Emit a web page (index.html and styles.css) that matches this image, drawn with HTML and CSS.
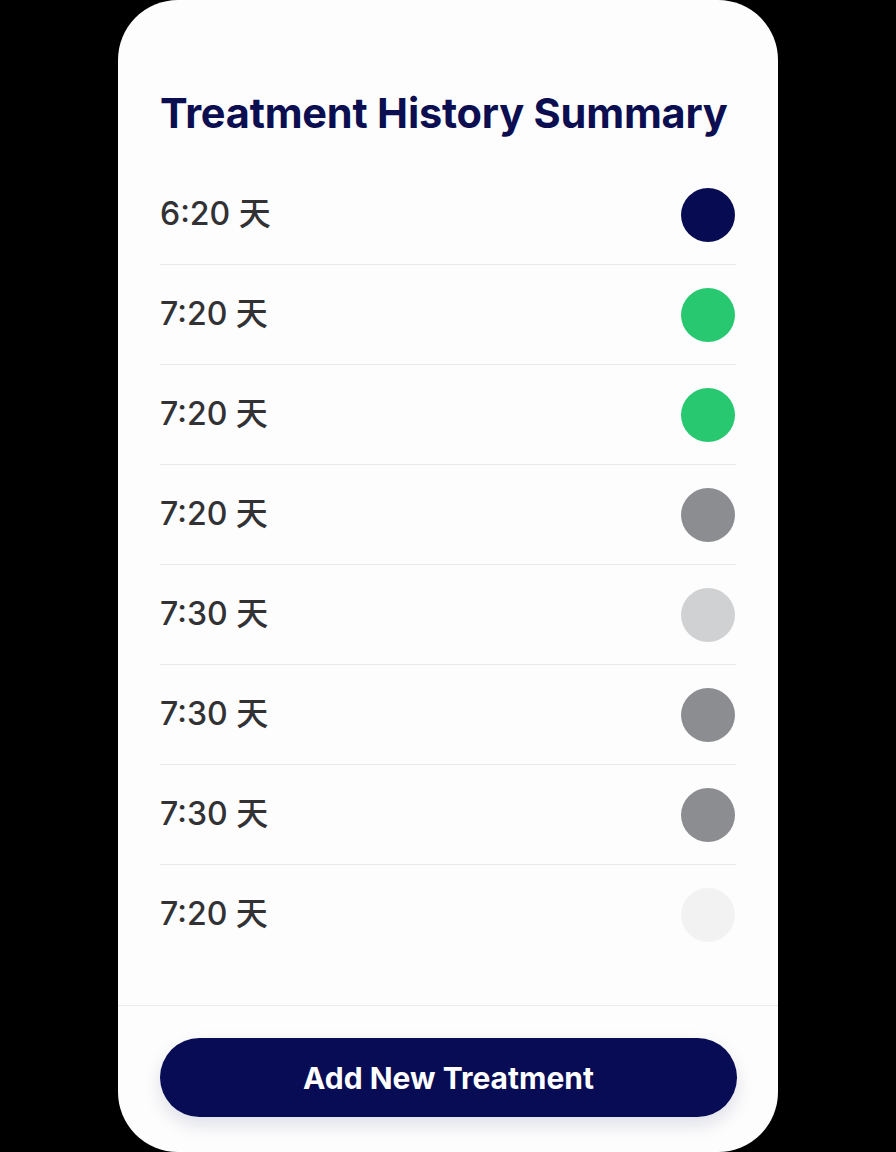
FILE: index.html
```html
<!DOCTYPE html>
<html lang="zh">
<head>
<meta charset="utf-8">
<title>Treatment History Summary</title>
<link rel="stylesheet" href="styles.css">
</head>
<body>
<main class="card">
  <header class="card-header">
    <h1 class="title">Treatment History Summary</h1>
  </header>
  <ul class="list">
    <li class="row"><span class="label">6:20 天</span><span class="dot dot-navy"></span></li>
    <li class="row"><span class="label">7:20 天</span><span class="dot dot-green"></span></li>
    <li class="row"><span class="label">7:20 天</span><span class="dot dot-green"></span></li>
    <li class="row"><span class="label">7:20 天</span><span class="dot dot-gray"></span></li>
    <li class="row"><span class="label">7:30 天</span><span class="dot dot-light"></span></li>
    <li class="row"><span class="label">7:30 天</span><span class="dot dot-gray"></span></li>
    <li class="row"><span class="label">7:30 天</span><span class="dot dot-gray"></span></li>
    <li class="row"><span class="label">7:20 天</span><span class="dot dot-faint"></span></li>
  </ul>
  <footer class="card-footer">
    <button class="add-btn" type="button">Add New Treatment</button>
  </footer>
</main>
</body>
</html>
```

FILE: styles.css
```css
* { box-sizing: border-box; }
html, body { margin: 0; padding: 0; background: #000; }
body {
  font-family: Inter, "Noto Sans CJK SC", sans-serif;
  height: 1152px;
  overflow: hidden;
}
.card {
  width: 660px;
  height: 1152px;
  margin: 0 auto;
  background: #fdfdfd;
  border-radius: 60px;
  display: flex;
  flex-direction: column;
  overflow: hidden;
}
.card-header {
  padding: 88px 42px 0;
}
.title {
  margin: 0;
  font-size: 41.5px;
  line-height: 50px;
  font-weight: 700;
  color: #0b0e50;
  letter-spacing: -0.2px;
  white-space: nowrap;
}
.list {
  list-style: none;
  margin: 27px 0 0;
  padding: 0 42px 41px;
}
.row {
  height: 100px;
  display: flex;
  align-items: center;
  justify-content: space-between;
  border-bottom: 1px solid #e9e9ea;
}
.row:last-child { border-bottom: none; height: 99px; }
.label {
  font-size: 32px;
  color: #323235;
  font-weight: 500;
  margin-bottom: 8px;
}
.dot {
  width: 54px;
  height: 54px;
  border-radius: 50%;
  margin-right: 1px;
}
.dot-navy { background: #070c52; }
.dot-green { background: #27c870; }
.dot-gray { background: #8c8d91; }
.dot-light { background: #d0d1d3; }
.dot-faint { background: #f2f2f3; }
.card-footer {
  border-top: 1.5px solid #ececee;
  padding: 32px 41px 0 42px;
}
.add-btn {
  width: 100%;
  height: 79px;
  border: none;
  border-radius: 40px;
  background: #070c55;
  color: #fff;
  font-family: Inter, sans-serif;
  font-size: 30px;
  font-weight: 700;
  box-shadow: 0 8px 18px rgba(10, 14, 80, 0.12);
  cursor: pointer;
}
```
